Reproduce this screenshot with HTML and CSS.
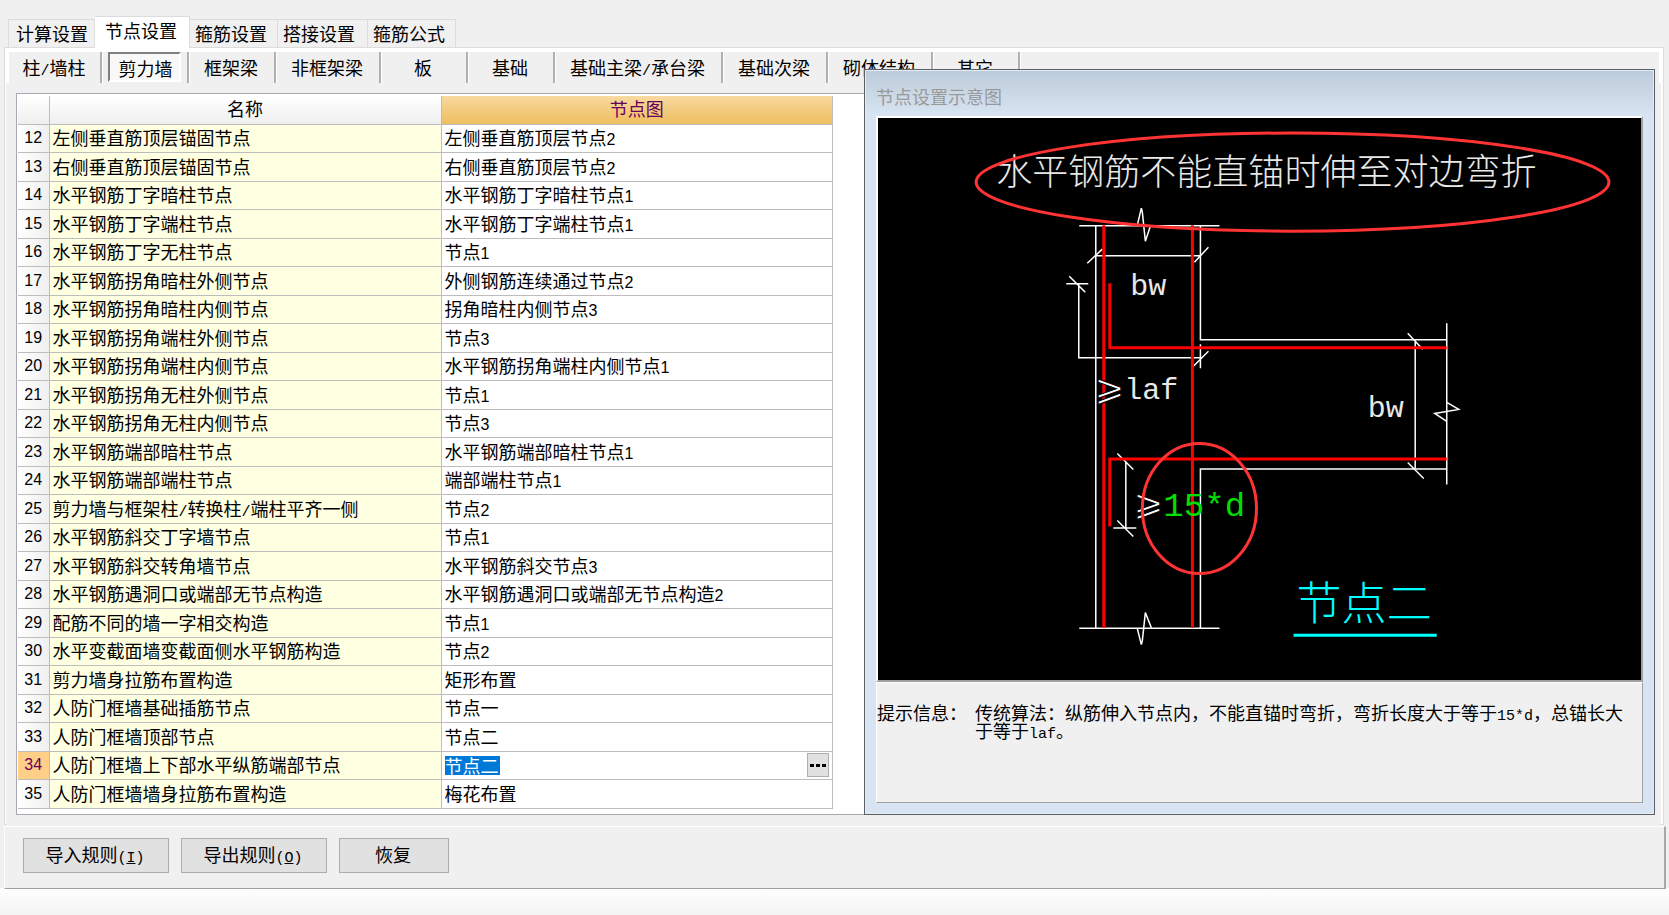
FILE: index.html
```html
<!DOCTYPE html>
<html lang="zh-CN">
<head>
<meta charset="utf-8">
<title>节点设置</title>
<link rel="stylesheet" href="styles.css">
</head>
<body>
<main class="app">
  <div class="tabs" role="tablist">
    <button class="tab" role="tab">计算设置</button>
    <button class="tab tab-active" role="tab" aria-selected="true">节点设置</button>
    <button class="tab" role="tab">箍筋设置</button>
    <button class="tab" role="tab">搭接设置</button>
    <button class="tab" role="tab">箍筋公式</button>
  </div>
  <section class="pane">
    <nav class="kinds">
      <div class="kind first"><button>柱<span class="s">/</span>墙柱</button></div>
      <div class="kind"><button class="pressed">剪力墙</button></div>
      <div class="kind"><button>框架梁</button></div>
      <div class="kind wide"><button>非框架梁</button></div>
      <div class="kind"><button>板</button></div>
      <div class="kind"><button>基础</button></div>
      <div class="kind widest"><button>基础主梁<span class="s">/</span>承台梁</button></div>
      <div class="kind wide"><button>基础次梁</button></div>
      <div class="kind wide"><button>砌体结构</button></div>
      <div class="kind"><button>其它</button></div>
    </nav>
    <div class="grid-frame">
      <table class="grid">
        <colgroup><col class="c-num"><col class="c-name"><col class="c-node"></colgroup>
        <thead><tr><th></th><th>名称</th><th class="current">节点图</th></tr></thead>
        <tbody>
          <tr><th>12</th><td>左侧垂直筋顶层锚固节点</td><td>左侧垂直筋顶层节点<span class="n">2</span></td></tr>
          <tr><th>13</th><td>右侧垂直筋顶层锚固节点</td><td>右侧垂直筋顶层节点<span class="n">2</span></td></tr>
          <tr><th>14</th><td>水平钢筋丁字暗柱节点</td><td>水平钢筋丁字暗柱节点<span class="n">1</span></td></tr>
          <tr><th>15</th><td>水平钢筋丁字端柱节点</td><td>水平钢筋丁字端柱节点<span class="n">1</span></td></tr>
          <tr><th>16</th><td>水平钢筋丁字无柱节点</td><td>节点<span class="n">1</span></td></tr>
          <tr><th>17</th><td>水平钢筋拐角暗柱外侧节点</td><td>外侧钢筋连续通过节点<span class="n">2</span></td></tr>
          <tr><th>18</th><td>水平钢筋拐角暗柱内侧节点</td><td>拐角暗柱内侧节点<span class="n">3</span></td></tr>
          <tr><th>19</th><td>水平钢筋拐角端柱外侧节点</td><td>节点<span class="n">3</span></td></tr>
          <tr><th>20</th><td>水平钢筋拐角端柱内侧节点</td><td>水平钢筋拐角端柱内侧节点<span class="n">1</span></td></tr>
          <tr><th>21</th><td>水平钢筋拐角无柱外侧节点</td><td>节点<span class="n">1</span></td></tr>
          <tr><th>22</th><td>水平钢筋拐角无柱内侧节点</td><td>节点<span class="n">3</span></td></tr>
          <tr><th>23</th><td>水平钢筋端部暗柱节点</td><td>水平钢筋端部暗柱节点<span class="n">1</span></td></tr>
          <tr><th>24</th><td>水平钢筋端部端柱节点</td><td>端部端柱节点<span class="n">1</span></td></tr>
          <tr><th>25</th><td>剪力墙与框架柱<span class="s">/</span>转换柱<span class="s">/</span>端柱平齐一侧</td><td>节点<span class="n">2</span></td></tr>
          <tr><th>26</th><td>水平钢筋斜交丁字墙节点</td><td>节点<span class="n">1</span></td></tr>
          <tr><th>27</th><td>水平钢筋斜交转角墙节点</td><td>水平钢筋斜交节点<span class="n">3</span></td></tr>
          <tr><th>28</th><td>水平钢筋遇洞口或端部无节点构造</td><td>水平钢筋遇洞口或端部无节点构造<span class="n">2</span></td></tr>
          <tr><th>29</th><td>配筋不同的墙一字相交构造</td><td>节点<span class="n">1</span></td></tr>
          <tr><th>30</th><td>水平变截面墙变截面侧水平钢筋构造</td><td>节点<span class="n">2</span></td></tr>
          <tr><th>31</th><td>剪力墙身拉筋布置构造</td><td>矩形布置</td></tr>
          <tr><th>32</th><td>人防门框墙基础插筋节点</td><td>节点一</td></tr>
          <tr><th>33</th><td>人防门框墙顶部节点</td><td>节点二</td></tr>
          <tr><th class="current-row">34</th><td>人防门框墙上下部水平纵筋端部节点</td><td class="editing"><div class="editor"><input type="text" value="节点二" aria-label="节点图"><button aria-label="选择节点图"><svg viewBox="0 0 20 20"><path d="M2 9h4v3H2zM8 9h4v3H8zM14 9h4v3h-4z"/></svg></button></div></td></tr>
          <tr><th>35</th><td>人防门框墙墙身拉筋布置构造</td><td>梅花布置</td></tr>
        </tbody>
      </table>
    </div>
  </section>
  <footer class="actions">
    <button>导入规则<span class="s">(<u>I</u>)</span></button>
    <button>导出规则<span class="s">(<u>O</u>)</span></button>
    <button class="short">恢复</button>
  </footer>

  <aside class="dialog" role="dialog" aria-labelledby="dlg-title">
    <h2 id="dlg-title">节点设置示意图</h2>
    <div class="drawing">
      <svg viewBox="878 118 762 561" role="img" aria-label="节点二">
        <g class="wall">
          <path d="M1079 225.500H1219M1079 627.500H1219M1095.500 225V627M1200 225V339.500H1446M1446 468.500H1200V627M1446 323V484"/>
          <path d="M1137 225L1141 208L1142 212L1145 241L1150 226M1137 628L1141 644L1142 640L1145 612L1151 627M1446 402L1458 409L1434 413L1446 421"/>
          <path d="M1095 255.500H1200M1087 263L1102 249M1194 262L1208 247"/>
          <path d="M1066 283.500H1088M1069 276L1085 292M1078.500 284V357.500H1202M1200 344V368M1192 367L1208 351"/>
          <path d="M1125.500 461V527M1117 453L1133 469M1117 520L1133 536M1113 527.500H1136"/>
          <path d="M1414.500 340V468M1407 333L1422 349M1407 462L1423 478"/>
        </g>
        <g class="bar">
          <path d="M1103.500 225V627M1192 225V627M1109.500 283V347.500H1446M1109.500 526V458.500H1446"/>
        </g>
        <text class="head" x="996" y="185">水平钢筋不能直锚时伸至对边弯折</text>
        <text class="mark" x="1130" y="295">bw</text>
        <text class="mark" x="1367" y="417">bw</text>
        <text class="geq" x="1094" y="400">⩾</text>
        <text class="mark" x="1124" y="399">laf</text>
        <text class="geq" x="1133" y="514">⩾</text>
        <text class="depth" x="1163" y="515">15*d</text>
        <text class="name" x="1296" y="619">节点二</text>
        <path class="name-line" d="M1293 634.500H1436"/>
        <g class="note">
          <ellipse cx="1292" cy="182" rx="316" ry="49"/>
          <ellipse cx="1199" cy="508" rx="57" ry="65"/>
        </g>
      </svg>
    </div>
    <dl class="hint">
      <dt>提示信息：</dt>
      <dd>传统算法：纵筋伸入节点内，不能直锚时弯折，弯折长度大于等于<span class="s">15*d</span>，总锚长大于等于<span class="s">laf</span>。</dd>
    </dl>
  </aside>
</main>
</body>
</html>
```
FILE: styles.css
```css
* { box-sizing: border-box; }

body {
  margin: 0;
  background: #f0f0f0;
  color: #000;
  font: 18px/20px "Noto Sans CJK SC", sans-serif;
}

button, input {
  margin: 0;
  padding: 0;
  border: 0;
  background: none;
  color: inherit;
  font: inherit;
}

.s, .n { line-height: 0; }
.s { font-family: "Liberation Mono", monospace; font-size: 15px; }
.n { font-family: "Liberation Sans", sans-serif; font-size: 16px; }

.app {
  position: relative;
  display: flex;
  flex-direction: column;
  min-height: 100vh;
  padding: 16px 3px 0 4px;
  background: linear-gradient(#fff, #f3f3f3) bottom / 100% 27px no-repeat #f0f0f0;
}

/* Main tabs */
.tabs {
  position: relative;
  z-index: 1;
  display: flex;
  align-items: flex-end;
  height: 32px;
  padding-left: 4px;
}
.tab {
  width: 90px;
  height: 29px;
  padding: 0 5px 2px;
  border: 1px solid #dcdcdc;
  border-left: 0;
  text-align: left;
  white-space: nowrap;
}
.tab:first-child {
  width: 87px;
  padding-left: 7px;
  border-left: 1px solid #dcdcdc;
}
.tab:nth-child(3), .tab:last-child { width: 88px; }
.tab-active {
  width: 95px;
  height: 32px;
  padding: 0 10px 6px;
  border-bottom: 0;
  background: #fff;
}

.pane {
  display: flex;
  flex-direction: column;
  margin: -1px 2px 0 0;
  padding: 4px;
  border: 1px solid #dcdcdc;
  background: #fff;
}

/* Member kinds */
.kinds {
  position: relative;
  display: flex;
  height: 31px;
  background: #f0f0f0;
}
.kind {
  flex: none;
  width: 87px;
  padding: 0 6px;
  border-right: 2px solid #b0b0b0;
  box-shadow: 1px 0 #fff;
}
.kind.first { width: 93px; }
.kind.wide { width: 105px; }
.kind.widest { width: 168px; }
.kind button {
  width: 100%;
  height: 30px;
  padding-right: 1px;
  white-space: nowrap;
}
.kind .pressed {
  padding: 1px 0 0 2px;
  border: 2px solid;
  border-color: #808080 #fff #fff #808080;
  background: #f8f8f8;
}

/* Node table */
.grid-frame {
  margin: 10px 8px 5px 7px;
  padding: 2px 1px 5px;
  border: 1px solid #a9a9b4;
  outline: 10px solid #f0f0f0;
  background: #fff;
}
.grid {
  width: 815px;
  border-collapse: collapse;
  table-layout: fixed;
}
.c-num { width: 31px; }
.c-name { width: 392px; }
.grid th, .grid td {
  height: 28px;
  padding: 0 3px 2px;
  border: 1px solid #bdbdbd;
  font-weight: normal;
  line-height: 20px;
  text-align: left;
  white-space: nowrap;
}
.grid tbody tr:nth-child(even) > * { height: 29px; }
.grid thead th {
  padding-bottom: 3px;
  border-top: 0;
  background: linear-gradient(#fff, #efefef);
  text-align: center;
}
.grid thead .current {
  background: linear-gradient(#f8d9a0, #efbd5e);
  color: #6a005c;
}
.grid tr > :first-child { border-left: 0; }
.grid tbody th {
  padding-bottom: 0;
  background: linear-gradient(90deg, #fff, #efefef);
  font-family: "Liberation Sans", sans-serif;
  font-size: 16px;
  text-align: center;
}
.grid tbody td:nth-child(2) { background: #ffffe1; }
.grid tbody .current-row { background: #ffcf87; color: #6a005c; }
.grid .editing { padding-bottom: 0; }

.editor {
  display: flex;
  align-items: center;
  justify-content: space-between;
  height: 27px;
}
.editor input {
  width: 55px;
  height: 19px;
  background: #0078d7;
  color: #fff;
}
.editor button {
  width: 22px;
  height: 24px;
  border: 1px solid #adadad;
  background: #e1e1e1;
}
.editor svg { display: block; width: 20px; }

/* Bottom bar */
.actions {
  display: flex;
  gap: 12px;
  margin-top: 1px;
  padding: 11px 18px 15px;
  border: 1px solid #fff;
  border-right: 2px solid #a8a8a8;
  border-bottom: 1px solid #a0a0a0;
  background: #f0f0f0;
}
.actions button {
  width: 146px;
  height: 35px;
  padding: 0 2px 3px 0;
  border: 1px solid #adadad;
  background: #e1e1e1;
}
.actions .short { width: 110px; }

/* Floating preview window */
.dialog {
  position: absolute;
  z-index: 2;
  top: 69px;
  left: 864px;
  right: 14px;
  padding: 0 11px 11px;
  border: 1px solid #5c6064;
  background: linear-gradient(#bccbda, #d8e4f1 46px);
  box-shadow: inset 0 0 0 1px #e3ebf4;
}
.dialog h2 {
  margin: 0;
  padding: 16px 0 10px;
  color: #9a9a9a;
  font-size: 18px;
  font-weight: normal;
  line-height: 20px;
}
.drawing {
  border: 2px solid;
  border-color: #fff #a0a0a0 #a0a0a0 #fff;
  background: #000;
}
.drawing svg { display: block; width: 100%; }
.wall path { fill: none; stroke: #fff; stroke-width: 1.5; }
.bar path { fill: none; stroke: #f00; stroke-width: 3; }
.note ellipse { fill: none; stroke: #ff3333; stroke-width: 3; }
.head { fill: #e8e8e8; font-size: 36px; font-weight: 300; }
.mark { fill: #e8e8e8; font: 30px "Liberation Mono", monospace; }
.geq { fill: #fff; stroke: #000; stroke-width: 1; font: 36px "DejaVu Sans", sans-serif; }
.depth { fill: #00e000; font: 34px "Liberation Mono", monospace; }
.name { fill: #0ff; font-size: 45px; font-weight: 300; }
.name-line { stroke: #0ff; stroke-width: 3; }

.hint {
  display: flex;
  gap: 8px;
  height: 121px;
  margin: 0;
  padding: 20px 18px 0 0;
  border: 1px solid;
  border-color: #fff #a0a0a0 #a0a0a0 #fff;
  background: #f0f0f0;
  line-height: 18px;
}
.hint dt { flex: none; }
.hint dd { flex: 1; margin: 0; }
```
